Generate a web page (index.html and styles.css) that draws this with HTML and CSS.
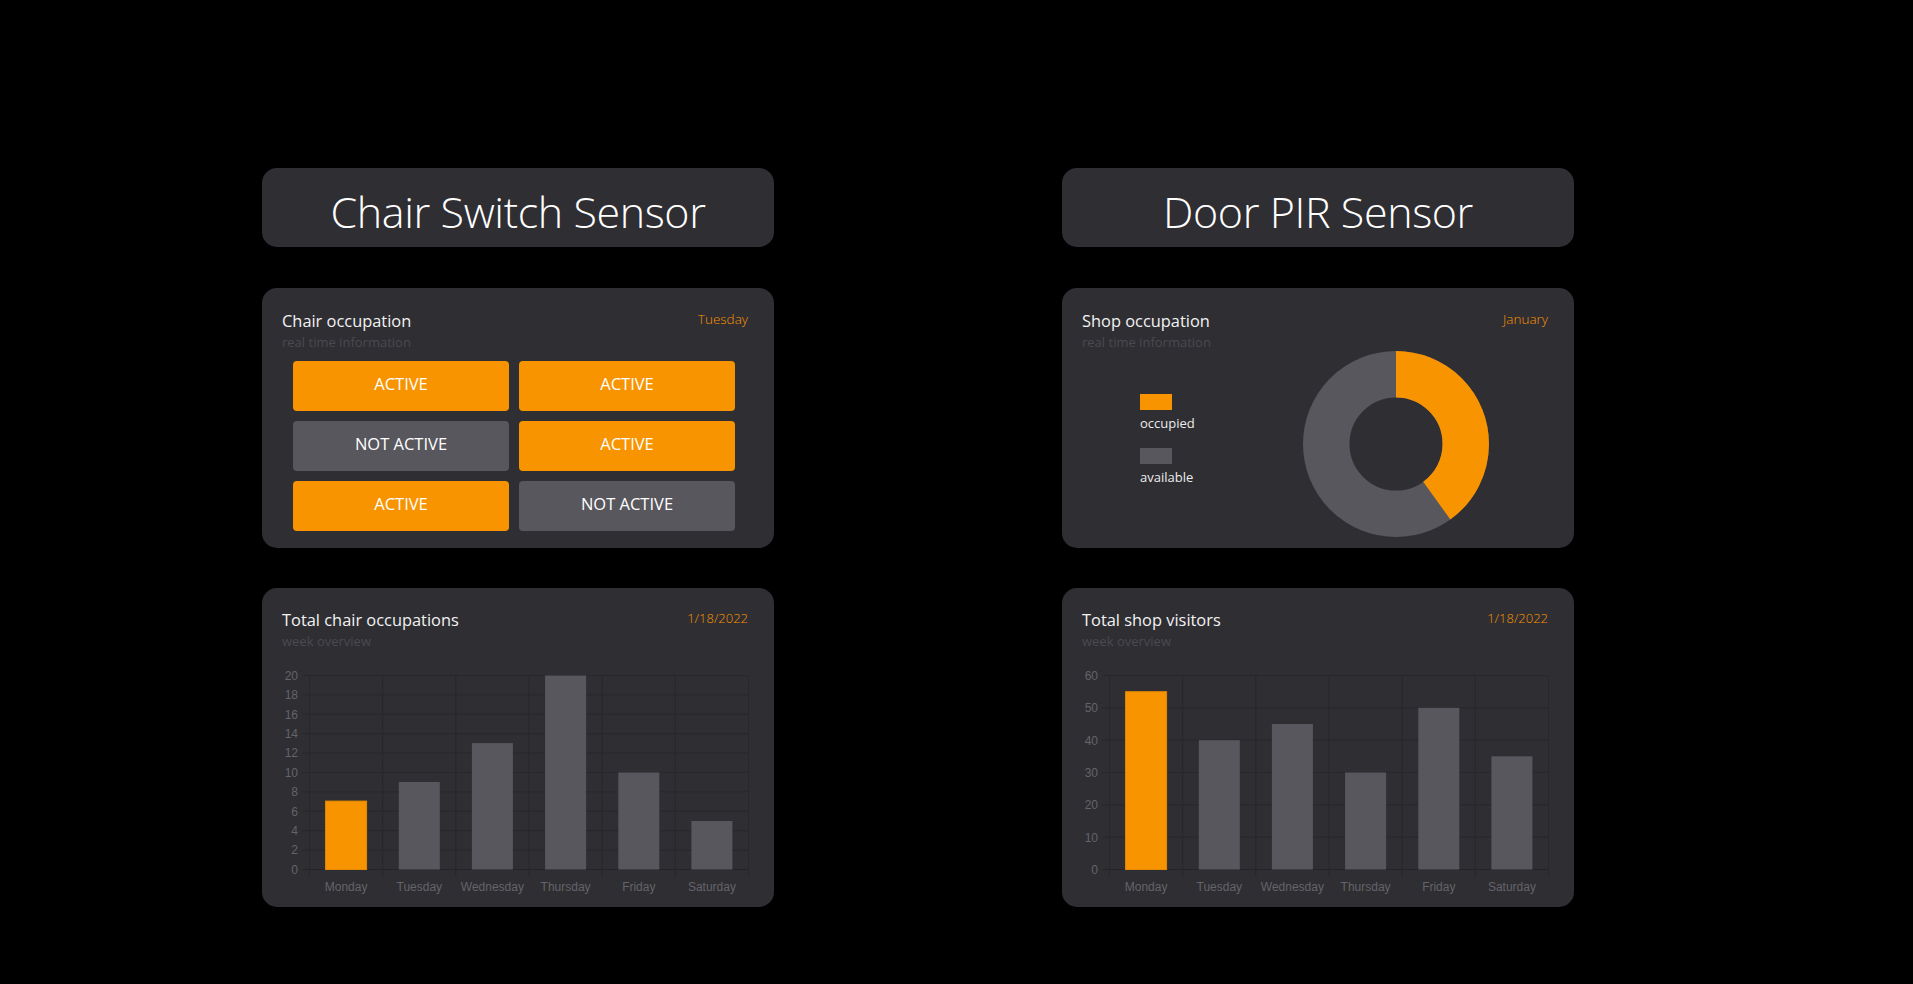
FILE: index.html
```html
<!DOCTYPE html>
<html lang="en">
<head>
<meta charset="utf-8">
<title>Sensor Dashboard</title>
<link rel="stylesheet" href="styles.css">
</head>
<body>
<main class="board">
  <section class="column">
    <header class="panel-title"><h1>Chair Switch Sensor</h1></header>

    <article class="card card-short">
      <div class="card-head">
        <div>
          <h2 class="card-name">Chair occupation</h2>
          <p class="card-sub">real time information</p>
        </div>
        <span class="card-date">Tuesday</span>
      </div>
      <div class="chairs">
        <div class="chair on">ACTIVE</div>
        <div class="chair on">ACTIVE</div>
        <div class="chair off">NOT ACTIVE</div>
        <div class="chair on">ACTIVE</div>
        <div class="chair on">ACTIVE</div>
        <div class="chair off">NOT ACTIVE</div>
      </div>
    </article>

    <article class="card card-tall">
      <div class="card-head">
        <div>
          <h2 class="card-name">Total chair occupations</h2>
          <p class="card-sub">week overview</p>
        </div>
        <span class="card-date">1/18/2022</span>
      </div>
      <svg class="chart" width="512" height="258" viewBox="0 0 512 258">
        <g class="grid">
          <line x1="40" y1="26.5" x2="486" y2="26.5"/>
          <line x1="40" y1="45.9" x2="486" y2="45.9"/>
          <line x1="40" y1="65.3" x2="486" y2="65.3"/>
          <line x1="40" y1="84.7" x2="486" y2="84.7"/>
          <line x1="40" y1="104.1" x2="486" y2="104.1"/>
          <line x1="40" y1="123.5" x2="486" y2="123.5"/>
          <line x1="40" y1="142.9" x2="486" y2="142.9"/>
          <line x1="40" y1="162.3" x2="486" y2="162.3"/>
          <line x1="40" y1="181.7" x2="486" y2="181.7"/>
          <line x1="40" y1="201.1" x2="486" y2="201.1"/>
          <line class="zero" x1="40" y1="220.5" x2="486" y2="220.5"/>
          <line x1="47.5" y1="26" x2="47.5" y2="228"/>
          <line x1="120.7" y1="26" x2="120.7" y2="228"/>
          <line x1="193.8" y1="26" x2="193.8" y2="228"/>
          <line x1="267" y1="26" x2="267" y2="228"/>
          <line x1="340.2" y1="26" x2="340.2" y2="228"/>
          <line x1="413.3" y1="26" x2="413.3" y2="228"/>
          <line x1="486.5" y1="26" x2="486.5" y2="228"/>
        </g>
        <g class="bars">
          <rect class="bar-hot" x="63.6" y="152.1" width="41" height="68.4"/>
          <rect x="136.8" y="133" width="41" height="87.5"/>
          <rect x="209.9" y="94.1" width="41" height="126.4"/>
          <rect x="283.1" y="26.5" width="41" height="194"/>
          <rect x="356.3" y="123.5" width="41" height="97"/>
          <rect x="429.4" y="172" width="41" height="48.5"/>
        </g>
        <g class="ylabels">
          <text x="36" y="30.8">20</text>
          <text x="36" y="50.2">18</text>
          <text x="36" y="69.6">16</text>
          <text x="36" y="89">14</text>
          <text x="36" y="108.4">12</text>
          <text x="36" y="127.8">10</text>
          <text x="36" y="147.2">8</text>
          <text x="36" y="166.6">6</text>
          <text x="36" y="186">4</text>
          <text x="36" y="205.4">2</text>
          <text x="36" y="224.8">0</text>
        </g>
        <g class="xlabels">
          <text x="84.1" y="242">Monday</text>
          <text x="157.3" y="242">Tuesday</text>
          <text x="230.4" y="242">Wednesday</text>
          <text x="303.6" y="242">Thursday</text>
          <text x="376.8" y="242">Friday</text>
          <text x="449.9" y="242">Saturday</text>
        </g>
      </svg>
    </article>
  </section>

  <section class="column">
    <header class="panel-title"><h1>Door PIR Sensor</h1></header>

    <article class="card card-short">
      <div class="card-head">
        <div>
          <h2 class="card-name">Shop occupation</h2>
          <p class="card-sub">real time information</p>
        </div>
        <span class="card-date">January</span>
      </div>
      <div class="occupancy">
        <ul class="legend">
          <li><span class="swatch swatch-hot"></span>occupied</li>
          <li><span class="swatch swatch-cold"></span>available</li>
        </ul>
        <svg class="donut" width="186" height="186" viewBox="0 0 186 186">
          <circle class="ring-cold" cx="93" cy="93" r="69.75"/>
          <circle class="ring-hot" cx="93" cy="93" r="69.75" stroke-dasharray="175.3 438.25" transform="rotate(-90 93 93)"/>
        </svg>
      </div>
    </article>

    <article class="card card-tall">
      <div class="card-head">
        <div>
          <h2 class="card-name">Total shop visitors</h2>
          <p class="card-sub">week overview</p>
        </div>
        <span class="card-date">1/18/2022</span>
      </div>
      <svg class="chart" width="512" height="258" viewBox="0 0 512 258">
        <g class="grid">
          <line x1="40" y1="26.5" x2="486" y2="26.5"/>
          <line x1="40" y1="58.8" x2="486" y2="58.8"/>
          <line x1="40" y1="91.2" x2="486" y2="91.2"/>
          <line x1="40" y1="123.5" x2="486" y2="123.5"/>
          <line x1="40" y1="155.8" x2="486" y2="155.8"/>
          <line x1="40" y1="188.2" x2="486" y2="188.2"/>
          <line class="zero" x1="40" y1="220.5" x2="486" y2="220.5"/>
          <line x1="47.5" y1="26" x2="47.5" y2="228"/>
          <line x1="120.7" y1="26" x2="120.7" y2="228"/>
          <line x1="193.8" y1="26" x2="193.8" y2="228"/>
          <line x1="267" y1="26" x2="267" y2="228"/>
          <line x1="340.2" y1="26" x2="340.2" y2="228"/>
          <line x1="413.3" y1="26" x2="413.3" y2="228"/>
          <line x1="486.5" y1="26" x2="486.5" y2="228"/>
        </g>
        <g class="bars">
          <rect class="bar-hot" x="63.6" y="42.7" width="41" height="177.8"/>
          <rect x="136.8" y="91.2" width="41" height="129.3"/>
          <rect x="209.9" y="75" width="41" height="145.5"/>
          <rect x="283.1" y="123.5" width="41" height="97"/>
          <rect x="356.3" y="58.8" width="41" height="161.7"/>
          <rect x="429.4" y="107.3" width="41" height="113.2"/>
        </g>
        <g class="ylabels">
          <text x="36" y="30.8">60</text>
          <text x="36" y="63.1">50</text>
          <text x="36" y="95.5">40</text>
          <text x="36" y="127.8">30</text>
          <text x="36" y="160.1">20</text>
          <text x="36" y="192.5">10</text>
          <text x="36" y="224.8">0</text>
        </g>
        <g class="xlabels">
          <text x="84.1" y="242">Monday</text>
          <text x="157.3" y="242">Tuesday</text>
          <text x="230.4" y="242">Wednesday</text>
          <text x="303.6" y="242">Thursday</text>
          <text x="376.8" y="242">Friday</text>
          <text x="449.9" y="242">Saturday</text>
        </g>
      </svg>
    </article>
  </section>
</main>
</body>
</html>
```

FILE: styles.css
```css
* { box-sizing: border-box; }

html, body {
  margin: 0;
  padding: 0;
  background: #000;
}

body {
  font-family: "Open Sans", "Noto Sans", sans-serif;
  color: #f2f2f2;
  width: 1913px;
  height: 984px;
  overflow: hidden;
}

.board {
  display: flex;
  gap: 288px;
  padding: 168px 0 0 262px;
}

.column {
  width: 512px;
  display: flex;
  flex-direction: column;
  gap: 41px;
}

.panel-title {
  height: 79px;
  background: #2f2e33;
  border-radius: 15px;
  display: flex;
  align-items: center;
  justify-content: center;
}

.panel-title h1 {
  margin: 0;
  font-size: 43px;
  font-weight: 300;
  letter-spacing: -0.4px;
  color: #fff;
  line-height: 1;
  padding-top: 7px;
}

.card {
  background: #2f2e33;
  border-radius: 15px;
  overflow: hidden;
}

.card-short { height: 260px; }
.card-tall { height: 319px; margin-top: -1px; }

.card-head {
  display: flex;
  justify-content: space-between;
  align-items: flex-start;
  padding: 22px 26px 0 20px;
}

.card-tall .card-head { padding-top: 21px; }

.card-name {
  margin: 0;
  font-size: 16.4px;
  font-weight: 400;
  line-height: 22px;
  color: #f2f2f2;
}

.card-sub {
  margin: 2px 0 0;
  font-size: 13px;
  font-weight: 400;
  line-height: 17px;
  color: #4a4a50;
}

.card-date {
  font-size: 13.5px;
  font-weight: 300;
  line-height: 20px;
  color: #f79400;
  margin-top: -1px;
}

.card-tall .card-date { font-size: 13px; }

.chairs {
  display: grid;
  grid-template-columns: 216px 216px;
  grid-auto-rows: 50px;
  gap: 10px;
  margin: 10px 0 0 31px;
}

.chair {
  border-radius: 4px;
  display: flex;
  align-items: center;
  justify-content: center;
  font-size: 16.5px;
  color: #fff;
  font-weight: 400;
  padding-bottom: 5px;
}

.chair.on { background: #f79400; }
.chair.off { background: #58575d; }

.occupancy {
  display: flex;
  align-items: flex-start;
  padding-left: 78px;
}

.legend {
  list-style: none;
  margin: 43px 0 0;
  padding: 0;
  width: 163px;
  display: flex;
  flex-direction: column;
  gap: 16px;
  font-size: 13px;
  color: #ececec;
}

.legend li {
  display: flex;
  flex-direction: column;
  align-items: flex-start;
  gap: 4px;
  line-height: 18px;
}

.swatch {
  display: block;
  width: 32px;
  height: 16px;
}

.swatch-hot { background: #f79400; }
.swatch-cold { background: #58575d; }

.donut { display: block; }

.ring-cold, .ring-hot {
  fill: none;
  stroke-width: 46.5;
}
.ring-cold { stroke: #58575d; }
.ring-hot { stroke: #f79400; }

.chart { display: block; }
.card-tall .chart { margin-top: -1px; }

.grid line {
  stroke: #28272c;
  stroke-width: 1;
}
.grid line.zero { stroke: #242327; }

.bars rect { fill: #58575d; }
.bars rect.bar-hot { fill: #f79400; stroke: #e58a00; stroke-width: 1; }

.ylabels text {
  font-family: "Liberation Sans", Arial, sans-serif;
  font-size: 12px;
  fill: #646469;
  text-anchor: end;
}

.xlabels text {
  font-family: "Liberation Sans", Arial, sans-serif;
  font-size: 12px;
  fill: #646469;
  text-anchor: middle;
}
```
